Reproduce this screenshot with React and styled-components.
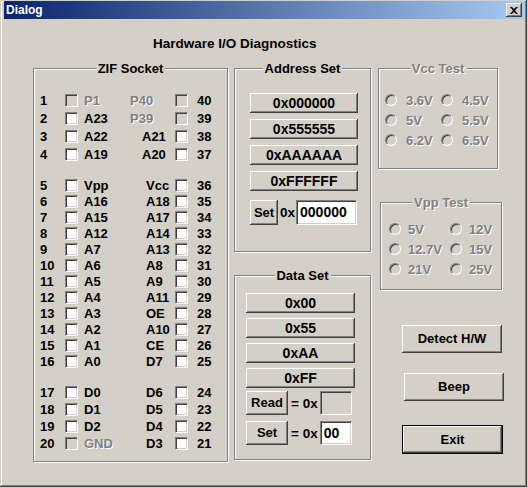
import styled, { createGlobalStyle } from 'styled-components';

const GlobalStyle = createGlobalStyle`
  html, body {
    margin: 0;
    padding: 0;
    background: #d4d0c8;
  }
  body {
    font-family: "Liberation Sans", Arial, sans-serif;
    font-weight: bold;
    font-size: 13px;
    color: #000;
  }
`;

const Window = styled.div`
  width: 527px;
  height: 487px;
  box-sizing: border-box;
  padding: 1px 2px 2px 4px;
  background: #d4d0c8;
  box-shadow: inset -1px -1px #404040, inset 1px 1px #d4d0c8,
    inset -2px -2px #808080, inset 2px 2px #fff;
  display: flex;
  flex-direction: column;
`;

const TitleBar = styled.div`
  height: 18px;
  display: flex;
  align-items: center;
  justify-content: space-between;
  padding: 0 3px 0 2px;
  background: linear-gradient(to right, #0a246a, #a6caf0);
`;

const TitleText = styled.span`
  color: #fff;
  font: bold 12px/14px "Liberation Sans", Arial, sans-serif;
`;

const CloseButton = styled.div`
  width: 16px;
  height: 14px;
  box-sizing: border-box;
  background: #d4d0c8;
  box-shadow: inset -1px -1px #404040, inset 1px 1px #fff,
    inset -2px -2px #808080, inset 2px 2px #d4d0c8;
  display: flex;
  align-items: center;
  justify-content: center;
`;

const Body = styled.div`
  flex: 1;
  padding-left: 29px;
  display: flex;
  flex-direction: column;
`;

const Heading = styled.div`
  margin: 17px 0 0 120px;
  font: bold 13.5px/16px "Liberation Sans", Arial, sans-serif;
`;

const MainRow = styled.div`
  display: flex;
  align-items: flex-start;
  margin-top: 16px;
`;

const GroupBox = styled.div`
  position: relative;
  box-sizing: border-box;
  width: ${p => p.$w}px;
  height: ${p => p.$h}px;
  margin-left: ${p => p.$ml || 0}px;
  margin-top: ${p => p.$mt || 0}px;
  border: 1px solid #808080;
  box-shadow: inset 1px 1px #fff, 1px 1px #fff;
  padding: ${p => p.$pad};
  display: flex;
  flex-direction: column;
`;

const Legend = styled.span`
  position: absolute;
  top: -8px;
  left: 50%;
  transform: translateX(-50%);
  padding: 0 2px;
  background: #d4d0c8;
  white-space: nowrap;
  font: bold 13px/15px "Liberation Sans", Arial, sans-serif;
  color: ${p => (p.$disabled ? '#808080' : '#000')};
  text-shadow: ${p => (p.$disabled ? '1px 1px 0 #fff' : 'none')};
`;

const PinGroup = styled.div`
  display: flex;
  flex-direction: column;
  margin-top: ${p => p.$mt || 0}px;
`;

const PinRow = styled.div`
  display: grid;
  grid-template-columns: 25px 19px 62px 29px 22px auto;
  align-items: center;
  height: ${p => p.$h}px;
`;

const PinNum = styled.span`
  line-height: 15px;
`;

const PinLabel = styled.span`
  line-height: 15px;
  white-space: nowrap;
  margin-left: ${p => p.$shift || 0}px;
  color: ${p => (p.$disabled ? '#808080' : '#000')};
  text-shadow: ${p => (p.$disabled ? '1px 1px 0 #fff' : 'none')};
`;

const CheckBox = styled.span`
  width: 13px;
  height: 13px;
  box-sizing: border-box;
  border: 1px solid;
  border-color: #808080 #fff #fff #808080;
  box-shadow: inset 1px 1px #404040, inset -1px -1px #d4d0c8;
  background: ${p => (p.$disabled ? '#d4d0c8' : '#fff')};
`;

const MiddleColumn = styled.div`
  display: flex;
  flex-direction: column;
  margin-left: 6px;
`;

const RightColumn = styled.div`
  display: flex;
  flex-direction: column;
  align-items: flex-start;
  margin-left: 7px;
`;

const ButtonStack = styled.div`
  display: flex;
  flex-direction: column;
  gap: ${p => p.$gap}px;
`;

const Button = styled.button`
  box-sizing: border-box;
  width: ${p => p.$w}px;
  height: ${p => p.$h}px;
  margin: ${p => (p.$mt || 0)}px 0 0 ${p => p.$ml || 0}px;
  padding: 0;
  background: #d4d0c8;
  border: ${p => (p.$default ? '1px solid #000' : 'none')};
  box-shadow: inset -1px -1px #404040, inset 1px 1px #fff,
    inset -2px -2px #808080, inset 2px 2px #d4d0c8;
  font: bold ${p => p.$fs || 13}px/16px "Liberation Sans", Arial, sans-serif;
  color: #000;
  flex-shrink: 0;
`;

const InputRow = styled.div`
  display: flex;
  align-items: center;
  height: ${p => p.$h}px;
  margin-top: ${p => p.$mt}px;
`;

const InlineText = styled.span`
  margin: 0 ${p => p.$mr}px 0 ${p => p.$ml}px;
  font-size: 13.5px;
  white-space: nowrap;
`;

const TextBox = styled.div`
  box-sizing: border-box;
  width: ${p => p.$w}px;
  height: 100%;
  padding: 2px 0 0 3px;
  background: ${p => (p.$readOnly ? '#d4d0c8' : '#fff')};
  border: 1px solid;
  border-color: #808080 #fff #fff #808080;
  box-shadow: inset 1px 1px #404040, inset -1px -1px #d4d0c8;
  font: bold 14px/18px "Liberation Sans", Arial, sans-serif;
`;

const RadioGrid = styled.div`
  display: grid;
  grid-template-columns: ${p => p.$col}px auto;
  grid-auto-rows: ${p => p.$row}px;
  align-items: center;
`;

const RadioItem = styled.div`
  display: flex;
  align-items: center;
  gap: ${p => p.$gap}px;
  color: #808080;
  text-shadow: 1px 1px 0 #fff;
  white-space: nowrap;
`;

const RadioDot = styled.span`
  width: 12px;
  height: 12px;
  box-sizing: border-box;
  border-radius: 50%;
  border: 1px solid;
  border-color: #808080 #fff #fff #808080;
  box-shadow: inset 1px 1px #404040, inset -1px -1px #d4d0c8;
  background: #d4d0c8;
  flex-shrink: 0;
`;

const pinGroups = [
  {
    h: 18,
    mt: 0,
    rows: [
      [1, 'P1', true, 'P40', true, 40, -16],
      [2, 'A23', false, 'P39', true, 39, -16],
      [3, 'A22', false, 'A21', false, 38, -4],
      [4, 'A19', false, 'A20', false, 37, -4],
    ],
  },
  {
    h: 16,
    mt: 14,
    rows: [
      [5, 'Vpp', false, 'Vcc', false, 36],
      [6, 'A16', false, 'A18', false, 35],
      [7, 'A15', false, 'A17', false, 34],
      [8, 'A12', false, 'A14', false, 33],
      [9, 'A7', false, 'A13', false, 32],
      [10, 'A6', false, 'A8', false, 31],
      [11, 'A5', false, 'A9', false, 30],
      [12, 'A4', false, 'A11', false, 29],
      [13, 'A3', false, 'OE', false, 28],
      [14, 'A2', false, 'A10', false, 27],
      [15, 'A1', false, 'CE', false, 26],
      [16, 'A0', false, 'D7', false, 25],
    ],
  },
  {
    h: 17,
    mt: 15,
    rows: [
      [17, 'D0', false, 'D6', false, 24],
      [18, 'D1', false, 'D5', false, 23],
      [19, 'D2', false, 'D4', false, 22],
      [20, 'GND', true, 'D3', false, 21],
    ],
  },
];

const vccVolts = ['3.6V', '4.5V', '5V', '5.5V', '6.2V', '6.5V'];
const vppVolts = ['5V', '12V', '12.7V', '15V', '21V', '25V'];

const ZifSocket = () => (
  <GroupBox $w={195} $h={394} $pad="22px 0 0 6px">
    <Legend>ZIF Socket</Legend>
    {pinGroups.map((g, gi) => (
      <PinGroup key={gi} $mt={g.mt}>
        {g.rows.map(([ln, ll, ld, rl, rd, rn, shift]) => (
          <PinRow key={ln} $h={g.h}>
            <PinNum>{ln}</PinNum>
            <CheckBox $disabled={ld} />
            <PinLabel $disabled={ld}>{ll}</PinLabel>
            <PinLabel $disabled={rd} $shift={shift}>{rl}</PinLabel>
            <CheckBox $disabled={rd} />
            <PinNum>{rn}</PinNum>
          </PinRow>
        ))}
      </PinGroup>
    ))}
  </GroupBox>
);

const App = () => {
  return (
    <>
      <GlobalStyle />
      <Window>
        <TitleBar>
          <TitleText>Dialog</TitleText>
          <CloseButton>
            <svg width="8" height="7" viewBox="0 0 8 7">
              <path d="M0 0h2l2 2 2-2h2L5 3.5 8 7H6L4 5 2 7H0l3-3.5z" fill="#000" />
            </svg>
          </CloseButton>
        </TitleBar>
        <Body>
          <Heading>Hardware I/O Diagnostics</Heading>
          <MainRow>
            <ZifSocket />
            <MiddleColumn>
              <GroupBox $w={137} $h={184} $pad="24px 0 0 15px">
                <Legend>Address Set</Legend>
                <ButtonStack $gap={6}>
                  {['0x000000', '0x555555', '0xAAAAAA', '0xFFFFFF'].map(t => (
                    <Button key={t} $w={108} $h={20} $fs={14}>{t}</Button>
                  ))}
                </ButtonStack>
                <InputRow $h={25} $mt={9}>
                  <Button $w={28} $h={25}>Set</Button>
                  <InlineText $ml={2} $mr={1}>0x</InlineText>
                  <TextBox $w={61}>000000</TextBox>
                </InputRow>
              </GroupBox>
              <GroupBox $w={137} $h={185} $mt={23} $pad="17px 0 0 11px">
                <Legend>Data Set</Legend>
                <ButtonStack $gap={5}>
                  {['0x00', '0x55', '0xAA', '0xFF'].map(t => (
                    <Button key={t} $w={109} $h={20} $fs={14}>{t}</Button>
                  ))}
                </ButtonStack>
                <InputRow $h={24} $mt={3}>
                  <Button $w={42} $h={24}>Read</Button>
                  <InlineText $ml={3} $mr={2}>= 0x</InlineText>
                  <TextBox $w={32} $readOnly />
                </InputRow>
                <InputRow $h={24} $mt={6}>
                  <Button $w={42} $h={24}>Set</Button>
                  <InlineText $ml={3} $mr={2}>= 0x</InlineText>
                  <TextBox $w={32}>00</TextBox>
                </InputRow>
              </GroupBox>
            </MiddleColumn>
            <RightColumn>
              <GroupBox $w={120} $h={101} $pad="21px 0 0 6px">
                <Legend $disabled>Vcc Test</Legend>
                <RadioGrid $col={56} $row={20}>
                  {vccVolts.map(v => (
                    <RadioItem key={v} $gap={9}>
                      <RadioDot />
                      {v}
                    </RadioItem>
                  ))}
                </RadioGrid>
              </GroupBox>
              <GroupBox $w={122} $h={88} $ml={2} $mt={33} $pad="16px 0 0 8px">
                <Legend $disabled>Vpp Test</Legend>
                <RadioGrid $col={61} $row={20}>
                  {vppVolts.map(v => (
                    <RadioItem key={v} $gap={7}>
                      <RadioDot />
                      {v}
                    </RadioItem>
                  ))}
                </RadioGrid>
              </GroupBox>
              <Button $w={100} $h={28} $ml={24} $mt={35}>Detect H/W</Button>
              <Button $w={100} $h={28} $ml={26} $mt={20}>Beep</Button>
              <Button $w={101} $h={29} $ml={24} $mt={24} $default>Exit</Button>
            </RightColumn>
          </MainRow>
        </Body>
      </Window>
    </>
  );
};

export default App;
